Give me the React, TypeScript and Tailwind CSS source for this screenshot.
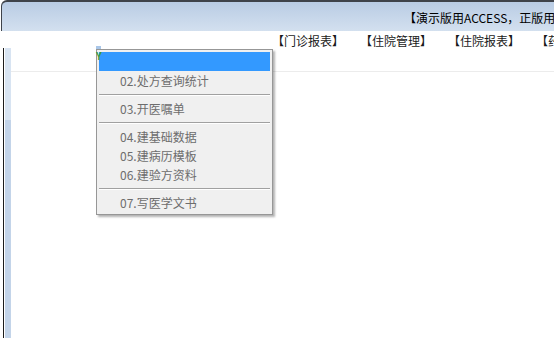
const font = { fontFamily: '"Noto Sans CJK SC", "Microsoft YaHei", sans-serif' };

const topMenu = ["【门诊报表】", "【住院管理】", "【住院报表】", "【药品管理】"];

type Entry = { label?: string; sep?: boolean };

const entries: Entry[] = [
  { label: "02.处方查询统计" },
  { sep: true },
  { label: "03.开医嘱单" },
  { sep: true },
  { label: "04.建基础数据" },
  { label: "05.建病历模板" },
  { label: "06.建验方资料" },
  { sep: true },
  { label: "07.写医学文书" },
];

function PopupMenu() {
  return (
    <div className="absolute left-[96px] top-[49px] w-[177px] border border-[#979797] bg-[#f0f0f0] px-[2px] py-[2px] shadow-[2px_2px_2px_rgba(0,0,0,0.3)]">
      <div className="h-[19px] bg-[#3399ff]" />
      {entries.map((e, i) =>
        e.sep ? (
          <div key={i} className="flex h-[9px] items-center">
            <div className="h-[2px] w-full border-t border-[#a0a0a0] border-b border-b-white" />
          </div>
        ) : (
          <div key={i} className="flex h-[19px] items-center pl-[21px] text-[12px] leading-none text-[#6d6d6d]">
            {e.label}
          </div>
        )
      )}
    </div>
  );
}

export default function App() {
  return (
    <div className="relative h-[338px] w-[554px] overflow-hidden bg-white text-black" style={font}>
      {/* title bar */}
      <div className="ml-px h-[31px] rounded-tl-[6px] border-t-2 border-l border-[#3f434a] bg-gradient-to-b from-[#b9cce4] to-[#d3e0ef]">
        <div className="overflow-hidden whitespace-nowrap pl-[402px] pt-[9px] text-[12px] leading-[14px]">
          【演示版用ACCESS，正版用SQL SERVER】
        </div>
      </div>

      {/* menu bar */}
      <div className="flex h-[17px] items-center gap-4 overflow-hidden whitespace-nowrap pl-[272px] pt-[3px] text-[12px] leading-none text-[#1a1a1a]">
        {topMenu.map((m) => (
          <span key={m}>{m}</span>
        ))}
      </div>

      {/* client area */}
      <div className="flex h-[290px]">
        <div className="w-[3px]" />
        <div className="w-px bg-[#1c1c1c]" />
        <div className="w-px" />
        <div className="flex w-[6px] flex-col">
          <div className="h-[72px] bg-[#d8e4f2]" />
          <div className="flex-1 bg-[#c3d4e9]" />
        </div>
        <div className="flex-1">
          <div className="mt-[23px] h-px bg-[#ececec]" />
        </div>
      </div>

      {/* small marker under menu */}
      <div className="absolute left-[96px] top-[46px] h-[4px] w-[5px] bg-[#a9c6e8]" />
      <PopupMenu />
      <div className="absolute left-[96px] top-[51px] text-[10px] font-bold leading-none text-[#3a9a3a]">Y</div>
    </div>
  );
}
